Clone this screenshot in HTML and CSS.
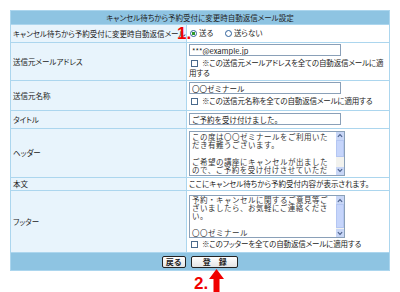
FILE: index.html
```html
<!DOCTYPE html>
<html lang="ja">
<head>
    <meta charset="UTF-8">
    <title>自動返信メール設定</title>
    <link rel="stylesheet" href="styles.css">
</head>
<body>
    <div class="page">
        <table class="settings">
            <colgroup>
                <col class="col-label">
                <col class="col-value">
            </colgroup>
            <tr>
                <th colspan="2" class="caption">キャンセル待ちから予約受付に変更時自動返信メール設定</th>
            </tr>
            <tr class="row-send">
                <th class="label">キャンセル待ちから予約受付に変更時自動返信メール</th>
                <td class="value">
                    <label class="opt"><input type="radio" name="send" checked>送る</label>
                    <label class="opt"><input type="radio" name="send">送らない</label>
                </td>
            </tr>
            <tr class="row-from">
                <th class="label">送信元メールアドレス</th>
                <td class="value">
                    <input type="text" class="field" value="***@example.jp">
                    <label class="apply"><input type="checkbox">※この送信元メールアドレスを全ての自動返信メールに適用する</label>
                </td>
            </tr>
            <tr class="row-name">
                <th class="label">送信元名称</th>
                <td class="value">
                    <input type="text" class="field" value="〇〇ゼミナール">
                    <label class="apply"><input type="checkbox">※この送信元名称を全ての自動返信メールに適用する</label>
                </td>
            </tr>
            <tr class="row-title">
                <th class="label">タイトル</th>
                <td class="value">
                    <input type="text" class="field" value="ご予約を受け付けました。">
                </td>
            </tr>
            <tr class="row-header">
                <th class="label">ヘッダー</th>
                <td class="value">
                    <div class="memo memo-header">
                        <textarea>この度は〇〇ゼミナールをご利用いただき有難うございます。

ご希望の講座にキャンセルが出ましたので、ご予約を受け付けさせていただきました。</textarea>
                        <div class="bar">
                            <span class="arrow"><svg width="7" height="5" viewBox="0 0 7 5"><path d="M1 4 L3.5 1.5 L6 4" fill="none" stroke="#4a5f8c" stroke-width="1.3"/></svg></span>
                            <span class="track"><span class="thumb"></span></span>
                            <span class="arrow"><svg width="7" height="5" viewBox="0 0 7 5"><path d="M1 1 L3.5 3.5 L6 1" fill="none" stroke="#4a5f8c" stroke-width="1.3"/></svg></span>
                        </div>
                    </div>
                </td>
            </tr>
            <tr class="row-body">
                <th class="label">本文</th>
                <td class="value">ここにキャンセル待ちから予約受付内容が表示されます。</td>
            </tr>
            <tr class="row-footer">
                <th class="label">フッター</th>
                <td class="value">
                    <div class="memo memo-footer">
                        <textarea>予約・キャンセルに関するご意見等ございましたら、お気軽にご連絡ください。

〇〇ゼミナール</textarea>
                        <div class="bar">
                            <span class="arrow"><svg width="7" height="5" viewBox="0 0 7 5"><path d="M1 4 L3.5 1.5 L6 4" fill="none" stroke="#4a5f8c" stroke-width="1.3"/></svg></span>
                            <span class="track"><span class="thumb"></span></span>
                            <span class="arrow"><svg width="7" height="5" viewBox="0 0 7 5"><path d="M1 1 L3.5 3.5 L6 1" fill="none" stroke="#4a5f8c" stroke-width="1.3"/></svg></span>
                        </div>
                    </div>
                    <label class="apply"><input type="checkbox">※このフッターを全ての自動返信メールに適用する</label>
                </td>
            </tr>
            <tr>
                <td colspan="2" class="actions">
                    <button type="button" class="btn">戻る</button>
                    <button type="button" class="btn btn-save">登　録</button>
                </td>
            </tr>
        </table>

        <div class="step step-1">1.</div>

        <div class="step-2">
            <span class="step">2.</span>
            <svg class="up" width="15" height="23" viewBox="0 0 15 23">
                <polygon points="7.5,0 15,10 10.5,10 10.5,23 4.5,23 4.5,10 0,10" fill="#f00000"/>
            </svg>
        </div>
    </div>
</body>
</html>
```

FILE: styles.css
```css
body {
    margin: 0;
    padding: 0;
    background: #fff;
    font-family: "Noto Sans CJK JP", "Noto Sans", sans-serif;
    font-size: 7.5px;
    color: #222;
    font-feature-settings: "palt";
}
.page {
    position: relative;
    padding: 10px 0 0 10px;
}
.settings {
    width: 380px;
    table-layout: fixed;
    border-collapse: separate;
    border-spacing: 1px;
    background-color: #acd6ee;
}
.col-label {
    width: 175px;
}
.settings th,
.settings td {
    padding: 0 2px;
    font-weight: normal;
    line-height: 10px;
}
.caption {
    height: 13px;
    background-color: #8ec4e2;
    text-align: center;
}
.label {
    background-color: #e8f4fc;
    text-align: left;
    white-space: nowrap;
    overflow: hidden;
}
.value {
    background-color: #fff;
    vertical-align: middle;
}
.row-send td,
.row-send th {
    height: 17px;
}
.row-from td,
.row-from th {
    height: 37px;
}
.row-name td,
.row-name th {
    height: 29px;
}
.row-title td,
.row-title th {
    height: 17px;
}
.row-header td,
.row-header th {
    height: 48px;
}
.row-body td,
.row-body th {
    height: 12px;
}
.row-footer td,
.row-footer th {
    height: 61px;
}
.row-from .value,
.row-name .value {
    vertical-align: top;
}

/* form parts */
.opt {
    display: inline-flex;
    align-items: center;
    margin-right: 9px;
}
input[type="radio"] {
    appearance: none;
    width: 7px;
    height: 7px;
    margin: 0 2px 0 1px;
    border: 1px solid #2d5f9a;
    border-radius: 50%;
    background: #fff;
}
input[type="radio"]:checked {
    background: radial-gradient(circle, #2a9a2a 0 1.6px, #fff 2px);
}
input[type="checkbox"] {
    appearance: none;
    width: 7px;
    height: 7px;
    margin: 0 4px 0 2px;
    border: 1px solid #4a6a8c;
    background: #fff;
    vertical-align: -1px;
}
.field {
    display: block;
    box-sizing: border-box;
    width: 152px;
    height: 12px;
    margin: 1px 0 2px;
    padding: 0 2px;
    border: 1px solid #8aa0b8;
    font-family: inherit;
    font-size: 7.5px;
    color: #222;
}
.apply {
    display: block;
    margin-top: 1px;
    letter-spacing: -0.15px;
}

/* textareas with classic scrollbar */
.memo {
    display: flex;
    width: 154px;
    border: 1px solid #8aa0b8;
    margin: 1px 0;
}
.memo-header {
    height: 43px;
}
.memo-footer {
    height: 41px;
}
.memo textarea {
    flex: 1;
    margin: 0;
    padding: 0 2px;
    border: 0;
    resize: none;
    overflow: hidden;
    font-family: "Noto Sans CJK JP", sans-serif;
    font-feature-settings: normal;
    font-size: 7.5px;
    letter-spacing: 0.5px;
    line-height: 8.4px;
    color: #333;
}
.memo-header textarea {
    padding-top: 1px;
}
.memo-footer textarea {
    line-height: 8.2px;
}
.bar {
    width: 8px;
    display: flex;
    flex-direction: column;
    background: #f2f2ee;
}
.arrow {
    height: 8px;
    display: flex;
    align-items: center;
    justify-content: center;
    background: #c8d6f6;
}
.arrow svg {
    width: 6px;
}
.track {
    flex: 1;
    display: flex;
    flex-direction: column;
}
.thumb {
    display: block;
    background: #c6d5fb;
    border: 1px solid #b4c6f2;
}
.memo-header .thumb {
    height: 15px;
}
.memo-footer .thumb {
    height: 22px;
}

/* button bar */
.actions {
    height: 17px;
    background-color: #8ec4e2;
    text-align: center;
}
.btn {
    height: 12px;
    padding: 0 3px;
    margin: 0 2px;
    border: 1px solid #222;
    border-radius: 2px;
    background: linear-gradient(#ffffff, #e4e4e4);
    font-family: inherit;
    font-size: 8px;
    font-weight: bold;
    line-height: 9px;
    color: #222;
}
.btn-save {
    width: 47px;
}

/* annotations */
.step {
    color: #f00000;
    font-family: "Liberation Sans", Arial, sans-serif;
    font-size: 17px;
    font-weight: bold;
    line-height: 1;
}
.step-1 {
    position: absolute;
    left: 177px;
    top: 25px;
}
.step-2 {
    display: flex;
    align-items: flex-end;
    gap: 1px;
    height: 21px;
    margin-left: 184px;
}
```
